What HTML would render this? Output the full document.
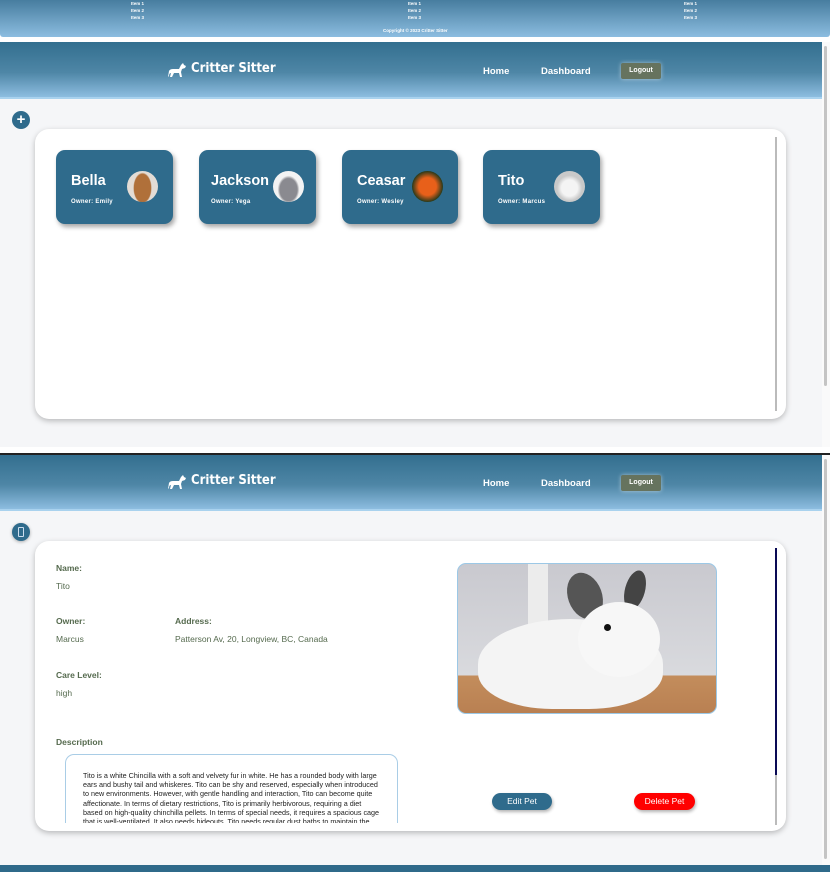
<!DOCTYPE html>
<html><head><meta charset="utf-8"><style>
*{margin:0;padding:0;box-sizing:border-box}
body{width:830px;height:872px;position:relative;overflow:hidden;background:#fff;font-family:"Liberation Sans",Arial,sans-serif}
.a{position:absolute}
.hdr{background:linear-gradient(#336f8f,#4e86a6 55%,#8dbde0);border-bottom:2px solid #a9d2ee}
.logo{color:#fff;font-size:13px;font-weight:bold;font-family:"DejaVu Sans Condensed","DejaVu Sans",sans-serif}
.nav{color:#fff;font-size:9.5px;font-weight:bold}
.lo{background:#66735e;color:#fff;font-size:7px;font-weight:bold;border-radius:2px;text-align:center;line-height:16px;box-shadow:0 0 4px rgba(255,255,255,.5)}
.bg{background:#f5f6f8}
.panel{background:#fff;border-radius:14px;box-shadow:0 2px 6px rgba(0,0,0,.25)}
.card{background:#2f6b8c;border-radius:9px;box-shadow:2px 3px 5px rgba(0,0,0,.35);color:#fff}
.card b{position:absolute;left:15px;top:23px;font-size:14.5px}
.card i{position:absolute;left:15px;top:49px;font-size:6px;font-weight:bold;font-style:normal;letter-spacing:.3px}
.av{position:absolute;right:15px;top:21px;width:31px;height:31px;border-radius:50%;background:#ddd}
.lbl{color:#556a4e;font-size:8.5px;font-weight:bold}
.val{color:#556a4e;font-size:8.5px}
.it{color:#fff;font-size:4.5px;font-weight:bold}
</style></head><body>
<div class="a" style="left:0;top:0;width:830px;height:37px;background:linear-gradient(#477d9f,#8cbde0);border-radius:0 0 3px 3px"></div>
<div class="a it" style="left:131px;top:0;line-height:7px">Item 1<br>Item 2<br>Item 3</div>
<div class="a it" style="left:408px;top:0;line-height:7px">Item 1<br>Item 2<br>Item 3</div>
<div class="a it" style="left:684px;top:0;line-height:7px">Item 1<br>Item 2<br>Item 3</div>
<div class="a it" style="left:383px;top:28px">Copyright © 2023 Critter Sitter</div>

<div class="a bg" style="left:0;top:99px;width:822px;height:348px"></div>
<div class="a hdr" style="left:0;top:42px;width:822px;height:57px"></div>
<div class="a" style="left:822px;top:42px;width:8px;height:405px;background:#fafafa"><div style="margin:4px 2px;width:3px;height:340px;background:#c4c4c4;border-radius:2px"></div></div>
<svg class="a" style="left:166px;top:62px" width="22" height="16" viewBox="0 0 22 16"><path d="M2 15 L3 9 Q4 7 7 7 L13 7 L15 3 L17 1 L18 3 L20 4 L19 6 L16 7 L15 10 L16 15 L14 15 L13 11 L8 11 L6 15 L4 15 L5 11 Q3 11 3 14Z" fill="#fff"/></svg>
<div class="a logo" style="left:191px;top:61px">Critter Sitter</div>
<div class="a nav" style="left:483px;top:66px">Home</div>
<div class="a nav" style="left:541px;top:66px">Dashboard</div>
<div class="a lo" style="left:621px;top:63px;width:40px;height:16px">Logout</div>
<div class="a" style="left:12px;top:111px;width:18px;height:18px;border-radius:50%;background:#2f6b8c;color:#fff;font-size:15px;line-height:17px;text-align:center;font-weight:bold">+</div>
<div class="a panel" style="left:35px;top:129px;width:751px;height:290px"></div>
<div class="a" style="left:775px;top:137px;width:2px;height:274px;background:#bbb"></div>
<div class="a card" style="left:56px;top:150px;width:117px;height:74px"><b>Bella</b><i>Owner: Emily</i><div class="av" style="background:radial-gradient(ellipse 30% 50% at 50% 55%,#b0703a 0 90%,#e3dcd5 100%)"></div></div>
<div class="a card" style="left:199px;top:150px;width:117px;height:74px"><b style="left:12px">Jackson</b><i style="left:12px">Owner: Yega</i><div class="av" style="right:12px;background:radial-gradient(ellipse 35% 45% at 50% 60%,#8a8a90 0 80%,#f3f3f3 100%)"></div></div>
<div class="a card" style="left:342px;top:150px;width:116px;height:74px"><b>Ceasar</b><i>Owner: Wesley</i><div class="av" style="background:radial-gradient(circle,#e8601a 0 40%,#2b3a1a 70%)"></div></div>
<div class="a card" style="left:483px;top:150px;width:117px;height:74px"><b>Tito</b><i>Owner: Marcus</i><div class="av" style="background:radial-gradient(circle at 50% 55%,#f4f4f4 0 35%,#c9c9c9 55%)"></div></div>

<div class="a" style="left:0;top:453px;width:830px;height:2px;background:#222"></div>
<div class="a bg" style="left:0;top:511px;width:822px;height:354px"></div>
<div class="a hdr" style="left:0;top:455px;width:822px;height:56px"></div>
<div class="a" style="left:822px;top:455px;width:8px;height:410px;background:#fafafa"><div style="margin:4px 2px;width:3px;height:400px;background:#c4c4c4;border-radius:2px"></div></div>
<svg class="a" style="left:166px;top:474px" width="22" height="16" viewBox="0 0 22 16"><path d="M2 15 L3 9 Q4 7 7 7 L13 7 L15 3 L17 1 L18 3 L20 4 L19 6 L16 7 L15 10 L16 15 L14 15 L13 11 L8 11 L6 15 L4 15 L5 11 Q3 11 3 14Z" fill="#fff"/></svg>
<div class="a logo" style="left:191px;top:473px">Critter Sitter</div>
<div class="a nav" style="left:483px;top:478px">Home</div>
<div class="a nav" style="left:541px;top:478px">Dashboard</div>
<div class="a lo" style="left:621px;top:475px;width:40px;height:16px">Logout</div>
<div class="a" style="left:12px;top:523px;width:18px;height:18px;border-radius:50%;background:#2f6b8c;box-shadow:0 1px 3px rgba(0,0,0,.3)"><div style="margin:4px 6px;width:6px;height:10px;border:1px solid #cde;border-radius:1px"></div></div>
<div class="a panel" style="left:35px;top:541px;width:751px;height:290px;overflow:hidden">
 <div class="a lbl" style="left:21px;top:22px">Name:</div>
 <div class="a val" style="left:21px;top:40px">Tito</div>
 <div class="a lbl" style="left:21px;top:75px">Owner:</div>
 <div class="a val" style="left:21px;top:93px">Marcus</div>
 <div class="a lbl" style="left:140px;top:75px">Address:</div>
 <div class="a val" style="left:140px;top:93px">Patterson Av, 20, Longview, BC, Canada</div>
 <div class="a lbl" style="left:21px;top:129px">Care Level:</div>
 <div class="a val" style="left:21px;top:147px">high</div>
 <div class="a lbl" style="left:21px;top:196px">Description</div>
 <div class="a" style="left:30px;top:213px;width:333px;height:69px;border:1px solid #a9cde6;border-bottom:none;border-radius:9px 9px 0 0;overflow:hidden">
  <div style="padding:16px 17px 0;font-size:7.2px;line-height:9.2px;color:#222">Tito is a white Chincilla with a soft and velvety fur in white. He has a rounded body with large ears and bushy tail and whiskeres. Tito can be shy and reserved, especially when introduced to new environments. However, with gentle handling and interaction, Tito can become quite affectionate. In terms of dietary restrictions, Tito is primarily herbivorous, requiring a diet based on high-quality chinchilla pellets. In terms of special needs, it requires a spacious cage that is well-ventilated. It also needs hideouts. Tito needs regular dust baths to maintain the cleanliness of the fur. Chinchillas are sensitive to heat and humidity, so the environment should remain cool.</div>
 </div>
 <div class="a" style="left:740px;top:7px;width:2px;height:227px;background:#0a0a55"></div>
 <div class="a" style="left:740px;top:234px;width:2px;height:50px;background:#bbb"></div>
 <div class="a" style="left:422px;top:22px;width:260px;height:151px;border:1px solid #9cc8e6;border-radius:9px;overflow:hidden;background:linear-gradient(#c9c9cf,#d9dade 75%,#c38d5c 75%,#b98052)">
  <div class="a" style="left:70px;top:0;width:20px;height:120px;background:#ececec"></div>
  <div class="a" style="left:20px;top:55px;width:185px;height:90px;border-radius:50% 50% 40% 40%;background:#f4f4f4"></div>
  <div class="a" style="left:110px;top:8px;width:34px;height:48px;border-radius:50%;background:#555;transform:rotate(-20deg)"></div>
  <div class="a" style="left:167px;top:6px;width:20px;height:40px;border-radius:50%;background:#444;transform:rotate(15deg)"></div>
  <div class="a" style="left:120px;top:38px;width:82px;height:75px;border-radius:50%;background:#f7f7f7"></div>
  <div class="a" style="left:146px;top:60px;width:7px;height:7px;border-radius:50%;background:#111"></div>
 </div>
 <div class="a" style="left:457px;top:252px;width:60px;height:17px;border-radius:9px;background:#2f6b8c;color:#fff;font-size:8.5px;text-align:center;line-height:17px;box-shadow:1px 2px 3px rgba(0,0,0,.3)">Edit Pet</div>
 <div class="a" style="left:599px;top:252px;width:61px;height:17px;border-radius:9px;background:#f00;color:#fff;font-size:8.5px;text-align:center;line-height:17px;box-shadow:1px 2px 3px rgba(0,0,0,.3)">Delete Pet</div>
</div>
<div class="a" style="left:0;top:865px;width:830px;height:7px;background:#2f6a8a"></div>
</body></html>
